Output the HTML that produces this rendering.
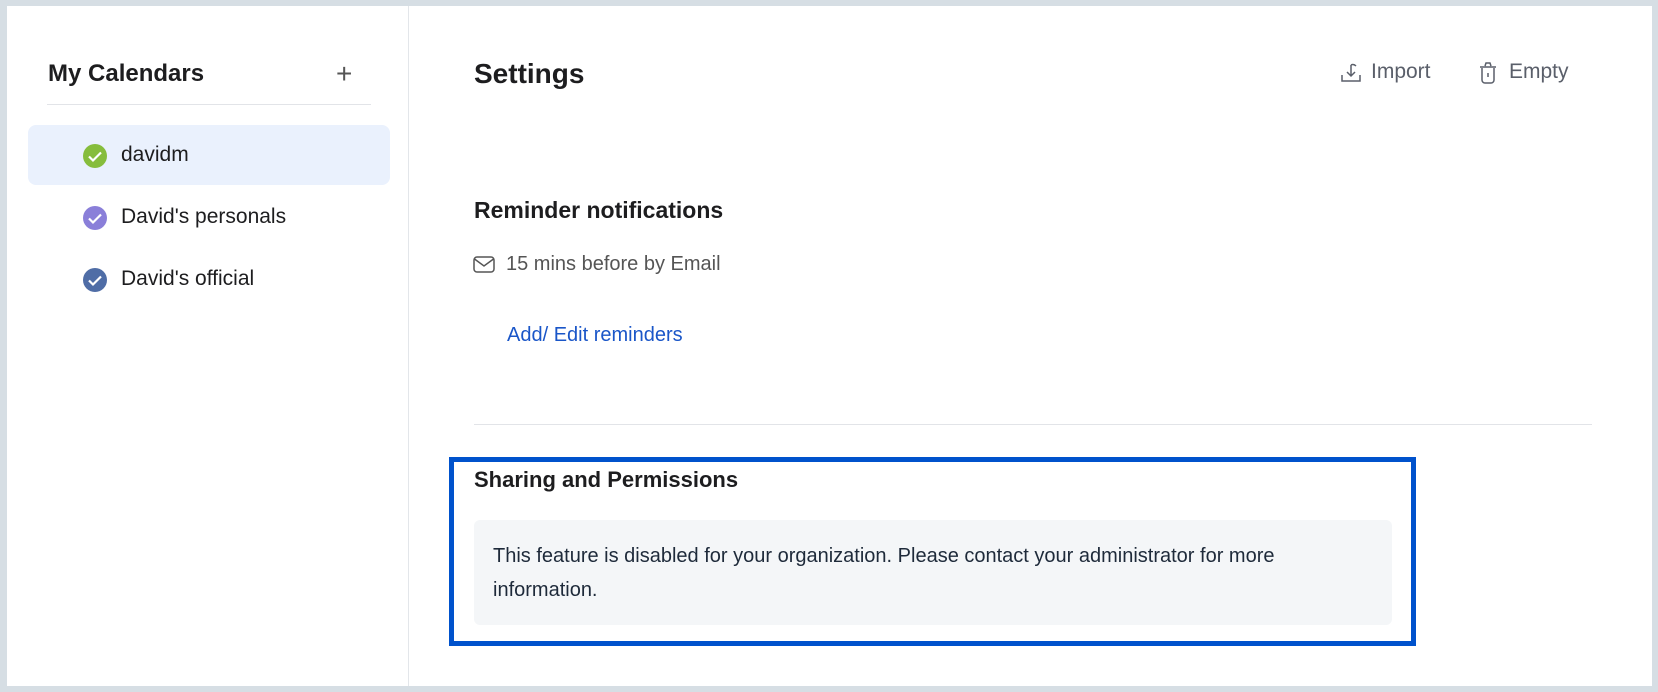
<!DOCTYPE html>
<html><head><meta charset="utf-8"><style>
*{margin:0;padding:0;box-sizing:border-box}
body{width:1658px;height:692px;background:#d6dee4;position:relative;overflow:hidden;font-family:"Liberation Sans",sans-serif;color:#1d1d1f}
.main{position:absolute;left:7px;top:6px;width:1645px;height:680px;background:#fff}
.side{position:absolute;left:7px;top:6px;width:402px;height:680px;border-right:1px solid #e3e6ea}
.a{position:absolute;white-space:nowrap}
.chk{position:absolute;width:24px;height:24px;border-radius:50%}
.chk svg{position:absolute;left:0;top:0}
</style></head><body>
<div class="main"></div>
<div class="side"></div>
<div class="a" style="left:48px;top:60px;font-size:24px;font-weight:bold">My Calendars</div>
<div class="a" style="left:336px;top:60px;font-size:28px;font-weight:300;color:#555;line-height:28px">+</div>
<div class="a" style="left:47px;top:104px;width:324px;height:1px;background:#e2e4e8"></div>
<div class="a" style="left:28px;top:125px;width:362px;height:60px;background:#eaf1fd;border-radius:8px"></div>
<div class="chk" style="left:83px;top:144px;background:#86bd3c"><svg width="24" height="24"><path d="M6 12.5l4 4 8-8" stroke="#fff" stroke-width="2.2" fill="none"/></svg></div>
<div class="a" style="left:121px;top:143px;font-size:21px">davidm</div>
<div class="chk" style="left:83px;top:206px;background:#8a7fd9"><svg width="24" height="24"><path d="M6 12.5l4 4 8-8" stroke="#fff" stroke-width="2.2" fill="none"/></svg></div>
<div class="a" style="left:121px;top:205px;font-size:21px">David's personals</div>
<div class="chk" style="left:83px;top:268px;background:#4f6da6"><svg width="24" height="24"><path d="M6 12.5l4 4 8-8" stroke="#fff" stroke-width="2.2" fill="none"/></svg></div>
<div class="a" style="left:121px;top:267px;font-size:21px">David's official</div>

<div class="a" style="left:474px;top:58px;font-size:28px;font-weight:bold">Settings</div>
<svg class="a" style="left:1340px;top:62px" width="22" height="22" viewBox="0 0 22 22"><path d="M2 13v6h18v-6M11 3v11M7 10l4 4 4-4M11 3c2-1 4 0 5 1" stroke="#5a5f6a" stroke-width="1.5" fill="none"/></svg>
<div class="a" style="left:1371px;top:60px;font-size:21px;color:#5a5f6a">Import</div>
<svg class="a" style="left:1478px;top:61px" width="20" height="24" viewBox="0 0 20 24"><path d="M4 7v12a3 3 0 0 0 3 3h6a3 3 0 0 0 3-3V7M2 6h16M7 5l1-3h4l1 3M10 12v4" stroke="#5a5f6a" stroke-width="1.5" fill="none"/></svg>
<div class="a" style="left:1509px;top:60px;font-size:21px;color:#5a5f6a">Empty</div>

<div class="a" style="left:474px;top:197px;font-size:23px;font-weight:bold">Reminder notifications</div>
<svg class="a" style="left:473px;top:256px" width="22" height="17" viewBox="0 0 22 17"><rect x="1" y="1" width="20" height="15" rx="3" stroke="#555" stroke-width="1.5" fill="none"/><path d="M1.5 3l9.5 7 9.5-7" stroke="#555" stroke-width="1.5" fill="none"/></svg>
<div class="a" style="left:506px;top:253px;font-size:20px;color:#555">15 mins before by Email</div>
<div class="a" style="left:507px;top:324px;font-size:20px;color:#1a56c8">Add/ Edit reminders</div>
<div class="a" style="left:474px;top:424px;width:1118px;height:1px;background:#e2e4e8"></div>

<div class="a" style="left:449px;top:457px;width:967px;height:189px;border:5px solid #0052cc"></div>
<div class="a" style="left:474px;top:467px;font-size:22px;font-weight:bold">Sharing and Permissions</div>
<div class="a" style="left:474px;top:520px;width:918px;height:105px;background:#f4f6f8;border-radius:6px"></div>
<div class="a" style="left:493px;top:539px;font-size:20px;line-height:34px;color:#1e2a3a;white-space:normal;width:880px">This feature is disabled for your organization. Please contact your administrator for more information.</div>
</body></html>
